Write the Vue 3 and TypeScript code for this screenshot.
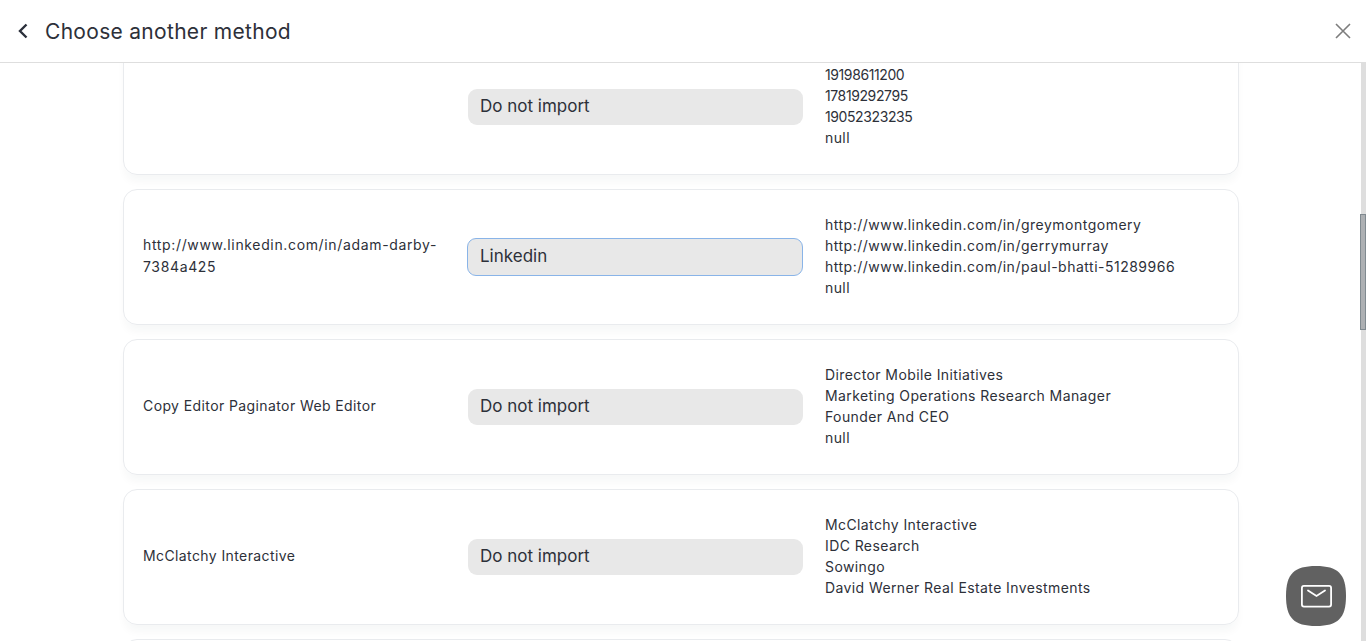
<script setup lang="ts">
interface MappingRow {
  source: string;
  target: string;
  focused?: boolean;
  samples: string[];
}

const rows: MappingRow[] = [
  { source: '', target: 'Do not import', samples: ['19198611200', '17819292795', '19052323235', 'null'] },
  {
    source: 'http://www.linkedin.com/in/adam-darby-7384a425',
    target: 'Linkedin',
    focused: true,
    samples: [
      'http://www.linkedin.com/in/greymontgomery',
      'http://www.linkedin.com/in/gerrymurray',
      'http://www.linkedin.com/in/paul-bhatti-51289966',
      'null',
    ],
  },
  {
    source: 'Copy Editor Paginator Web Editor',
    target: 'Do not import',
    samples: ['Director Mobile Initiatives', 'Marketing Operations Research Manager', 'Founder And CEO', 'null'],
  },
  {
    source: 'McClatchy Interactive',
    target: 'Do not import',
    samples: ['McClatchy Interactive', 'IDC Research', 'Sowingo', 'David Werner Real Estate Investments'],
  },
  // only the top edge of this one is on screen
  { source: '', target: '', samples: [] },
];

const isNumeric = (value: string) => /^\d+$/.test(value);
const isUrl = (value: string) => value.startsWith('http');
</script>

<template>
  <div class="page">
    <header class="header">
      <svg class="back" width="12" height="16" viewBox="0 0 12 16" fill="none">
        <path d="M9.5 1.5 3 8l6.5 6.5" stroke="#2b303b" stroke-width="2.4" />
      </svg>
      <h1 class="title">Choose another method</h1>
      <svg class="close" width="16" height="16" viewBox="0 0 16 16" fill="none">
        <path d="M1 1l14 14M15 1 1 15" stroke="#7d7d7d" stroke-width="1.6" />
      </svg>
    </header>

    <main class="content">
      <div class="list">
        <section v-for="(row, i) in rows" :key="i" class="card">
          <div class="source" :class="{ url: isUrl(row.source) }">{{ row.source }}</div>
          <div v-if="row.target" class="select" :class="{ 'select--focused': row.focused }">{{ row.target }}</div>
          <ul class="samples">
            <li v-for="sample in row.samples" :key="sample" :class="{ numeric: isNumeric(sample), url: isUrl(sample) }">
              {{ sample }}
            </li>
          </ul>
        </section>
      </div>
      <div class="scrollbar"><div class="scrollbar__thumb" /></div>
    </main>

    <button class="chat" type="button" aria-label="Messages">
      <svg width="60" height="60" viewBox="0 0 60 60" fill="none">
        <path d="M30 0C52 0 60 8 60 30S52 60 30 60 0 52 0 30 8 0 30 0Z" fill="#616161" />
        <rect x="15.9" y="19.9" width="29.2" height="20.7" rx="2" stroke="#fff" stroke-width="1.8" />
        <path d="M22 24.5l8.5 5.5 8.5-5.5" stroke="#fff" stroke-width="1.8" stroke-linecap="round" />
      </svg>
    </button>
  </div>
</template>

<style scoped>
.page {
  display: flex;
  flex-direction: column;
  height: 641px;
  overflow: hidden;
  background: #fff;
  color: #2d3039;
  font-family: Inter, 'Open Sans', sans-serif;
}

.header {
  display: flex;
  flex: none;
  align-items: center;
  height: 62px;
  padding: 0 15px 0 17px;
  border-bottom: 1px solid #dedede;
}

.back {
  flex: none;
}

.title {
  flex: 1;
  margin: 0 0 0 16px;
  font-size: 21px;
  font-weight: 400;
  letter-spacing: 0.3px;
  line-height: 1;
}

.close {
  flex: none;
}

.content {
  position: relative;
  flex: 1;
  overflow: hidden;
}

.list {
  display: flex;
  flex-direction: column;
  gap: 14px;
  width: 1116px;
  margin: -24px 0 0 123px;
}

.card {
  display: grid;
  grid-template-columns: 302px 336px 1fr;
  column-gap: 22px;
  align-items: center;
  box-sizing: border-box;
  height: 136px;
  padding: 0 19px;
  border: 1px solid #e9ebee;
  border-radius: 14px;
  box-shadow: 0 8px 10px -2px rgba(30, 40, 60, 0.04);
  font-size: 14px;
  letter-spacing: 0.4px;
}

.source {
  padding-bottom: 2px;
  line-height: 22px;
}

.source.url {
  letter-spacing: 0.65px;
}

.select {
  box-sizing: border-box;
  height: 36px;
  margin-left: 1px;
  padding: 0 12px;
  border-radius: 9px;
  background: #e8e8e8;
  font-size: 17px;
  letter-spacing: 0;
  line-height: 34px;
}

.select--focused {
  height: 38px;
  margin-left: 0;
  border: 1px solid #89b4e8;
  line-height: 34px;
}

.samples {
  margin: 0;
  padding: 0 0 2px;
  list-style: none;
  line-height: 21px;
}

.numeric {
  letter-spacing: -0.4px;
}

.url {
  letter-spacing: 0.5px;
}

.scrollbar {
  position: absolute;
  top: 0;
  right: 0;
  bottom: 0;
  width: 5px;
  background: #dedede;
}

.scrollbar__thumb {
  position: absolute;
  top: 151px;
  right: 0;
  box-sizing: border-box;
  width: 6px;
  height: 116px;
  border: 1px solid #808a90;
  background: #adb0b3;
}

.chat {
  position: fixed;
  top: 566px;
  left: 1286px;
  width: 60px;
  height: 60px;
  padding: 0;
  border: 0;
  background: none;
}
</style>

<style>
body {
  margin: 0;
}
</style>
